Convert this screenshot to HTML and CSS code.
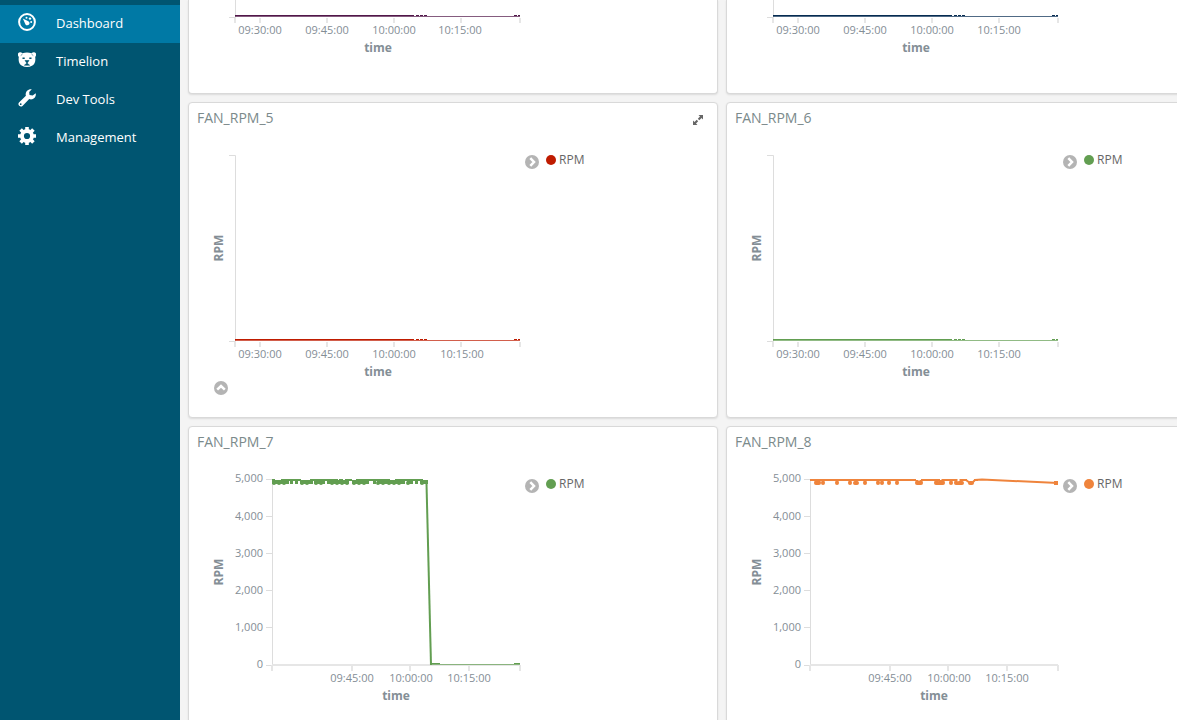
FILE: index.html
```html
<!DOCTYPE html>
<html lang="en">
<head>
<meta charset="utf-8">
<title>Dashboard</title>
<link rel="stylesheet" href="styles.css">
</head>
<body>
<svg class="defs" aria-hidden="true">
  <symbol id="chevron-right" viewBox="0 0 14 14"><circle cx="7" cy="7" r="7" fill="#b4b4b4"/><path d="M5.300 3.200 9 7l-3.700 3.800" fill="none" stroke="#fff" stroke-width="2.500"/></symbol>
  <symbol id="chevron-up" viewBox="0 0 14 14"><circle cx="7" cy="7" r="7" fill="#b4b4b4"/><path d="M3.200 8.700 7 5l3.800 3.700" fill="none" stroke="#fff" stroke-width="2.500"/></symbol>
  <symbol id="expand" viewBox="0 0 12 12"><path d="M6.500 1H11v4.500L9.500 4 7.300 6.200 5.800 4.700 8 2.500zM1 6.500 2.500 8l2.200-2.200 1.500 1.500L4 9.500 5.500 11H1z"/></symbol>
  <symbol id="axes" viewBox="0 0 336 284">
    <path class="axis" d="M40 22.500h6.500v186M40 208.500h6.500"/>
    <path class="tick" d="M46 209v5M71 209v5M138 209v5M205 209v5M272 209v5M331 209v5"/>
  </symbol>
  <symbol id="flat-line" viewBox="0 0 336 284">
    <path d="M46 207.500h285" fill="none" stroke="currentColor" stroke-width="1" opacity=".7"/>
    <path d="M46 206.500h179" fill="none" stroke="currentColor" stroke-width="1"/>
    <path d="M227 206.500h12M325 206.500h6" fill="none" stroke="currentColor" stroke-width="1" stroke-dasharray="3 1"/>
  </symbol>
  <symbol id="scaled-axes" viewBox="0 0 336 284">
    <path class="axis" d="M77 22.500h6.500v186M77 59.500h6M77 96.500h6M77 133.500h6M77 170.500h6M77 208.500h6"/>
    <path class="tick" d="M83 208h248M83 208v6M163 209v5M221 209v5M280 209v5M331 208v6"/>
  </symbol>
</svg>
<div class="app">
  <nav class="sidebar">
    <a class="nav-link active" href="#dashboard">
      <svg class="nav-icon" viewBox="0 0 18 18"><circle cx="9" cy="9" r="7.900" fill="none" stroke="#fff" stroke-width="2"/><path d="m4.800 5.600 5.500 2.600a2.200 2.200 0 1 1-2.800 3.200z" fill="#fff"/><circle cx="8.500" cy="4.700" r="1" fill="#fff"/><circle cx="12" cy="5.600" r="1.200" fill="#fff"/><circle cx="13.200" cy="9" r="1" fill="#fff"/></svg>
      <span>Dashboard</span></a>
    <a class="nav-link" href="#timelion">
      <svg class="nav-icon" viewBox="0 0 18 18"><path d="M0 2.500C1 1 3 1 4.500 2.200Q9 1 13.500 2.200C15 1 17 1 18 2.500c.4 1.500-.1 2.700-.8 3.400.6 4-.3 7-2.800 8.600Q9 17.500 3.600 14.500C1.100 12.900.2 9.900.8 5.900.1 5.200-.4 4 0 2.500z" fill="#fff"/><path d="M4.500 7.200h2.200M11.300 7.200h2.200" stroke="#005571" stroke-width="1.600"/><path d="M7 9.500h4L9.600 11.500v1.200l2 1.500H6.400l2-1.500v-1.200zM2.700 4.600l1.800-1.500M15.300 4.600l-1.800-1.500" fill="#005571" stroke="#005571" stroke-width=".6"/></svg>
      <span>Timelion</span></a>
    <a class="nav-link" href="#dev-tools">
      <svg class="nav-icon" viewBox="0 0 18 18"><path fill="#fff" fill-rule="evenodd" d="M17.700 4.300c.7 2.700-.9 5.300-3.500 6-1.100.3-2.100.1-3-.2l-6.700 6.900a2.500 2.500 0 0 1-3.500-3.500l6.900-6.700C7 3.900 8.600 1.200 11.200.4c.9-.3 1.800-.3 2.600-.1L11.200 3l.3 3 3.200.4zM2.700 14.300a.9.9 0 1 0 .1 1.800.9.900 0 0 0-.1-1.800z"/></svg>
      <span>Dev Tools</span></a>
    <a class="nav-link" href="#management">
      <svg class="nav-icon" viewBox="0 0 18 18"><path fill="none" stroke="#fff" stroke-width="3.600" d="M9 0v3M9 15v3M0 9h3M15 9h3M2.600 2.600l2.200 2.200M13.200 13.200l2.200 2.200M2.600 15.400l2.200-2.200M13.200 4.800l2.200-2.200"/><circle cx="9" cy="9" r="5" fill="none" stroke="#fff" stroke-width="3.800"/></svg>
      <span>Management</span></a>
  </nav>

  <main class="dashboard">
    <section class="panel continued">
      <svg class="chart tail plum" viewBox="0 191 336 93">
        <use href="#axes" width="336" height="284"/><use href="#flat-line" width="336" height="284"/>
        <g class="label"><text x="71" y="225">09:30:00</text><text x="138" y="225">09:45:00</text><text x="205" y="225">10:00:00</text><text x="271" y="225">10:15:00</text></g>
        <text class="axis-title" x="189" y="243">time</text>
      </svg>
    </section>
    <section class="panel continued">
      <svg class="chart tail navy" viewBox="0 191 336 93">
        <use href="#axes" width="336" height="284"/><use href="#flat-line" width="336" height="284"/>
        <g class="label"><text x="71" y="225">09:30:00</text><text x="138" y="225">09:45:00</text><text x="205" y="225">10:00:00</text><text x="272" y="225">10:15:00</text></g>
        <text class="axis-title" x="189" y="243">time</text>
      </svg>
    </section>

    <section class="panel">
      <header class="panel-head"><h2>FAN_RPM_5</h2><button class="icon-button expand" aria-label="Expand panel"><svg class="expand-icon"><use href="#expand"/></svg></button></header>
      <div class="panel-body">
        <div class="plot">
          <svg class="chart short red" viewBox="0 0 336 248">
            <use href="#axes" width="336" height="284"/><use href="#flat-line" width="336" height="284"/>
            <g class="label"><text x="71" y="225">09:30:00</text><text x="138" y="225">09:45:00</text><text x="205" y="225">10:00:00</text><text x="273" y="225">10:15:00</text></g>
            <text class="axis-title" x="189" y="243">time</text>
            <text class="axis-title" transform="translate(34 115) rotate(-90)">RPM</text>
          </svg>
          <button class="icon-button spy" aria-label="Show data"><svg class="round-icon"><use href="#chevron-up"/></svg></button>
        </div>
        <div class="legend"><button class="icon-button toggle" aria-label="Toggle legend"><svg class="round-icon"><use href="#chevron-right"/></svg></button><span class="swatch red"></span><span>RPM</span></div>
      </div>
    </section>
    <section class="panel">
      <header class="panel-head"><h2>FAN_RPM_6</h2></header>
      <div class="panel-body">
        <svg class="chart green" viewBox="0 0 336 284">
          <use href="#axes" width="336" height="284"/><use href="#flat-line" width="336" height="284"/>
          <g class="label"><text x="71" y="225">09:30:00</text><text x="138" y="225">09:45:00</text><text x="205" y="225">10:00:00</text><text x="272" y="225">10:15:00</text></g>
          <text class="axis-title" x="189" y="243">time</text>
          <text class="axis-title" transform="translate(34 115) rotate(-90)">RPM</text>
        </svg>
        <div class="legend"><button class="icon-button toggle" aria-label="Toggle legend"><svg class="round-icon"><use href="#chevron-right"/></svg></button><span class="swatch green"></span><span>RPM</span></div>
      </div>
    </section>

    <section class="panel">
      <header class="panel-head"><h2>FAN_RPM_7</h2></header>
      <div class="panel-body">
        <svg class="chart green" viewBox="0 0 336 284">
          <use href="#scaled-axes" width="336" height="284"/>
          <g fill="none" stroke="currentColor" stroke-width="2">
            <path d="M83 23h3M92 23h20M121 23h28M150 23h4M156 23h7M167 23h34M206 23h28"/>
            <path stroke-width="4" d="M83 25h17M101 25h3M106 25h3M111 25h13M125 25h11M138 25h4M142 25h18M163 25h17M184 25h3M188 25h12M198 25h18M218 25h6M226 25h3M231 25h8"/>
            <path stroke-width="4" stroke-linecap="round" stroke-dasharray="0 5" d="M85 26h15M102 26v0M107 26v0M113 26h10M127 26h8M139 26v0M143 26h16M165 26h13M185 26v0M189 26h10M200 26h14M219 26h5M228 26v0M233 26h5"/>
            <path d="m237.500 26 4.500 182"/>
            <path d="M241 207.500h90" stroke-width="1" opacity=".7"/>
            <path d="M241 206.500h10M325 206.500h6" stroke-width="1"/>
          </g>
          <g class="label value"><text x="74" y="25">5,000</text><text x="74" y="63">4,000</text><text x="74" y="100">3,000</text><text x="74" y="137">2,000</text><text x="74" y="174">1,000</text><text x="74" y="211">0</text></g>
          <g class="label"><text x="163" y="225">09:45:00</text><text x="222" y="225">10:00:00</text><text x="280" y="225">10:15:00</text></g>
          <text class="axis-title" x="207" y="243">time</text>
          <text class="axis-title" transform="translate(34 115) rotate(-90)">RPM</text>
        </svg>
        <div class="legend"><button class="icon-button toggle" aria-label="Toggle legend"><svg class="round-icon"><use href="#chevron-right"/></svg></button><span class="swatch green"></span><span>RPM</span></div>
      </div>
    </section>
    <section class="panel">
      <header class="panel-head"><h2>FAN_RPM_8</h2></header>
      <div class="panel-body">
        <svg class="chart orange" viewBox="0 0 336 284">
          <use href="#scaled-axes" width="336" height="284"/>
          <g fill="none" stroke="currentColor" stroke-width="2">
            <path d="M83 23h106M194 23h14M210 23h3M216 23h13M235 23h5M247 23h4"/>
            <path stroke-width="4" stroke-linecap="round" d="M89 26v0M92 26v0M96 26v0M110 26v0M123 26v0M128 26h2M138 26v0M151 26v0M155 26v0M162 26v0M170 26v0M190 26h4M209 26h2M213 26v0M216 26v0M224 26v0M229 26v0M232 26h3M243 26h2"/>
            <path stroke-width="3" d="M89 22v4M92 22v4M96 22v4M110 22v4M123 22v4M129 23v3M138 22v4M151 22v4M155 22v4M162 22v4M170 22v4M190 23v3M194 23v3M209 22v4M213 23v3M216 22v4M224 22v4M229 22v4M234 22v4"/>
            <path d="M239 23l4 3M245 26l3-3 7-.5L331 26"/>
            <path stroke-width="4" d="M327 26h4"/>
          </g>
          <g class="label value"><text x="74" y="25">5,000</text><text x="74" y="63">4,000</text><text x="74" y="100">3,000</text><text x="74" y="137">2,000</text><text x="74" y="174">1,000</text><text x="74" y="211">0</text></g>
          <g class="label"><text x="163" y="225">09:45:00</text><text x="222" y="225">10:00:00</text><text x="280" y="225">10:15:00</text></g>
          <text class="axis-title" x="207" y="243">time</text>
          <text class="axis-title" transform="translate(34 115) rotate(-90)">RPM</text>
        </svg>
        <div class="legend"><button class="icon-button toggle" aria-label="Toggle legend"><svg class="round-icon"><use href="#chevron-right"/></svg></button><span class="swatch orange"></span><span>RPM</span></div>
      </div>
    </section>
  </main>
</div>
</body>
</html>
```
FILE: styles.css
```css
* { box-sizing: border-box; }
body {
  margin: 0;
  font-family: "Open Sans", "Noto Sans", sans-serif;
  background: #f4f4f4;
  overflow: hidden;
}
svg { display: block; }
.defs { position: absolute; width: 0; height: 0; }
.app { display: flex; height: 100vh; }
.sidebar {
  flex: 0 0 180px;
  padding-top: 5px;
  background: #005571;
}
.nav-link {
  display: flex;
  align-items: center;
  gap: 20px;
  height: 38px;
  padding: 0 0 2px 18px;
  color: #fff;
  font-size: 13px;
  line-height: 18px;
  text-decoration: none;
}
.nav-link.active { background: #0079a5; }
.nav-icon { width: 18px; height: 18px; margin-bottom: 2px; }

.dashboard {
  flex: 1;
  min-width: 0;
  display: grid;
  grid-template-columns: repeat(2, calc((100vw - 117px) / 2));
  align-content: start;
  gap: 8px;
  padding-left: 8px;
  overflow: hidden;
}
.panel {
  background: #fff;
  border: 1px solid #d9d9d9;
  border-radius: 4px;
  box-shadow: 0 1px 2px rgba(0, 0, 0, .1);
}
.panel.continued {
  border-top: 0;
  border-radius: 0 0 4px 4px;
}
.panel-head {
  display: flex;
  align-items: center;
  justify-content: space-between;
  height: 30px;
  padding: 0 13px 0 8px;
}
.panel-head h2 {
  margin: 0;
  font-size: 14px;
  font-weight: 400;
  line-height: 20px;
  color: #7b8a8b;
}
.icon-button {
  padding: 0;
  border: 0;
  background: none;
  cursor: pointer;
}
.expand { margin-top: 4px; }
.expand-icon { width: 12px; height: 12px; fill: #666; }
.round-icon { width: 14px; height: 14px; }
.panel-body { display: flex; min-height: 284px; }
.plot { display: flex; flex-direction: column; align-items: flex-start; }
.chart { flex: none; width: 336px; height: 284px; }
.chart.tail { height: 93px; }
.chart.short { height: 248px; }
.spy { margin-left: 25px; }
.axis { fill: none; stroke: #ddd; stroke-width: 1; }
.tick { fill: none; stroke: #e6e6e6; stroke-width: 2; }
.label { font-size: 11px; fill: #848e96; text-anchor: middle; }
.label.value { text-anchor: end; }
.axis-title { font-size: 12px; font-weight: 700; fill: #848e96; text-anchor: middle; }
.legend {
  display: flex;
  align-items: center;
  height: 18px;
  margin-top: 18px;
  font-size: 12px;
  line-height: 18px;
  color: #666;
}
.toggle { margin: 4px 7px 0 0; }
.swatch {
  width: 10px;
  height: 10px;
  margin-right: 3px;
  border-radius: 50%;
  background: currentColor;
}
.red { color: #bf1b00; }
.green { color: #629e51; }
.orange { color: #ef843c; }
.plum { color: #511749; }
.navy { color: #052b51; }
```
